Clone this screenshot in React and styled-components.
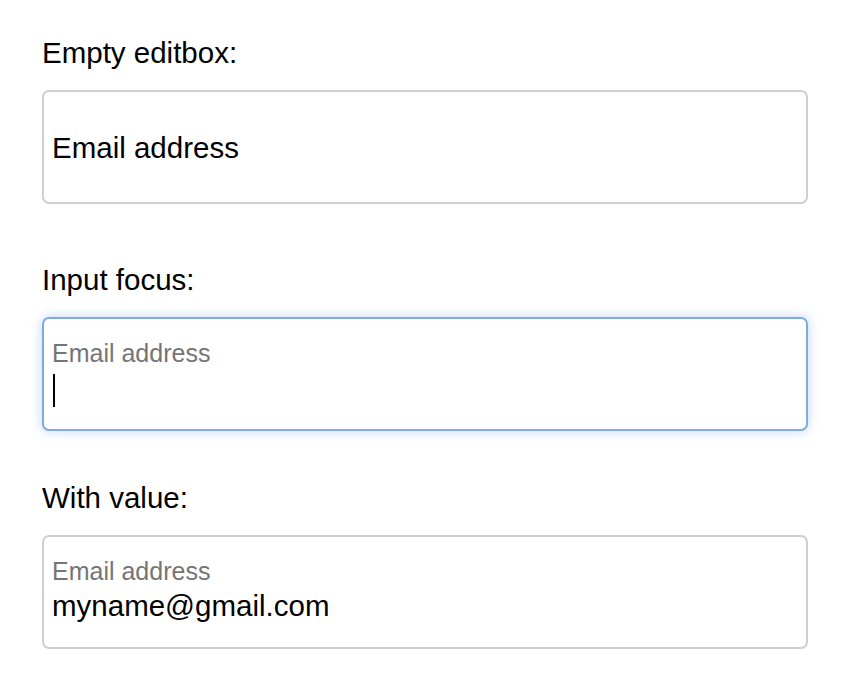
import React from "react";
import styled, { createGlobalStyle } from "styled-components";

const GlobalStyle = createGlobalStyle`
  html, body {
    margin: 0;
    padding: 0;
    background: #ffffff;
  }
  body {
    font-family: "Liberation Sans", Arial, sans-serif;
    color: #000000;
  }
`;

const Page = styled.div`
  padding: 36px 0 0 42px;
  box-sizing: border-box;
`;

const Section = styled.div`
  display: flex;
  flex-direction: column;
  margin-top: ${(p) => p.$top || 0}px;
`;

const Label = styled.div`
  font-size: 29.5px;
  line-height: 33px;
  margin-bottom: 21px;
`;

const Field = styled.div`
  width: 766px;
  height: 114px;
  box-sizing: border-box;
  border: 2px solid ${(p) => (p.$focused ? "#7eabe6" : "#cfcfcf")};
  border-radius: 7px;
  background: #ffffff;
  box-shadow: ${(p) => (p.$focused ? "0 0 12px rgba(100, 155, 230, 0.4)" : "none")};
  display: flex;
  flex-direction: column;
  justify-content: ${(p) => (p.$floating ? "flex-start" : "center")};
  padding: ${(p) => (p.$floating ? "20px 8px 0 8px" : "0 8px")};
`;

const Placeholder = styled.div`
  font-size: 29.5px;
  line-height: 33px;
  color: #000000;
`;

const FloatLabel = styled.div`
  font-size: 25px;
  line-height: 29px;
  color: #757575;
`;

const Value = styled.div`
  font-size: 29.5px;
  line-height: 33px;
  margin-top: 3px;
  color: #000000;
`;

const CaretLine = styled.div`
  height: 33px;
  margin-top: 6px;
  display: flex;
  align-items: stretch;
`;

const Caret = styled.span`
  display: block;
  width: 2px;
  margin-left: 1px;
  background: #000000;
`;

export default function App() {
  return (
    <>
      <GlobalStyle />
      <Page>
        <Section>
          <Label>Empty editbox:</Label>
          <Field>
            <Placeholder>Email address</Placeholder>
          </Field>
        </Section>

        <Section $top={59}>
          <Label>Input focus:</Label>
          <Field $focused $floating>
            <FloatLabel>Email address</FloatLabel>
            <CaretLine>
              <Caret />
            </CaretLine>
          </Field>
        </Section>

        <Section $top={50}>
          <Label>With value:</Label>
          <Field $floating>
            <FloatLabel>Email address</FloatLabel>
            <Value>myname@gmail.com</Value>
          </Field>
        </Section>
      </Page>
    </>
  );
}
